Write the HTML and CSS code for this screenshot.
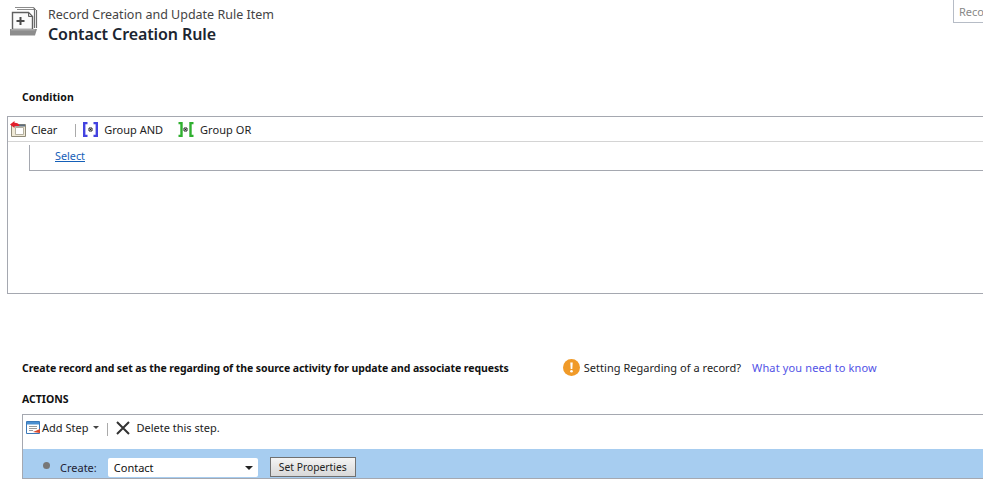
FILE: index.html
```html
<!DOCTYPE html>
<html lang="en">
<head>
<meta charset="utf-8">
<title>Contact Creation Rule</title>
<link rel="stylesheet" href="styles.css">
</head>
<body>
<header class="header">
  <svg class="header-icon" width="28" height="29" viewBox="0 0 28 29">
    <path d="M5 .5h19v2M7 2.500h19" fill="none" stroke="#8c8c8c"/>
    <path d="M24.500 1v20M26.500 3v18" fill="none" stroke="#6e6e6e" stroke-width="1.200"/>
    <path d="M2.500 5.500h16l4 4v13h-20z" fill="#fbfbfb" stroke="#5f5f5f" stroke-width="1.400"/>
    <path d="M18.500 5.500v4h4z" fill="#cfcfcf" stroke="#5f5f5f"/>
    <path d="M10.500 10v8M6.500 14h8" stroke="#4a4a4a" stroke-width="2"/>
    <path d="M0 22h27l-2 6.500H0z" fill="#8d8d8d"/>
    <path d="M1 22h24v1.500H1z" fill="#a8a8a8"/>
  </svg>
  <div class="titles">
    <div class="subtitle">Record Creation and Update Rule Item</div>
    <h1 class="title">Contact Creation Rule</h1>
  </div>
  <div class="search">Reco</div>
</header>

<h2 class="section-label condition-label">Condition</h2>
<section class="condition-panel">
  <div class="toolbar cond-toolbar">
    <span class="tool tool-clear">
      <svg width="16" height="16" viewBox="0 0 16 16">
        <path d="M1.500 3.500h14v12h-14z" fill="#efe9d6" stroke="#8f8a78"/>
        <path d="M5.500 6.500h8v7h-8z" fill="#fff" stroke="#b5b0a0"/>
        <path d="M4 4.500h11" stroke="#5d6d7e" stroke-width="2"/>
        <path d="M0 3.500 4.500 0v1.800c3 0 4.500.7 5 3.200H4.500v2z" fill="#e2202c"/>
      </svg>
      Clear
    </span>
    <span class="sep"></span>
    <span class="tool tool-and">
      <svg width="15" height="15" viewBox="0 0 15 15">
        <path d="M4.500 1H1.200v13h3.300M10.500 1h3.300v13h-3.300" fill="none" stroke="#4343e0" stroke-width="2.400"/>
        <path d="M6 6h3v3H6z" fill="#fff" stroke="#222"/>
        <path d="M7 7h1v1H7z" fill="#222"/>
      </svg>
      Group AND
    </span>
    <span class="tool tool-or">
      <svg width="16" height="15" viewBox="0 0 16 15">
        <path d="M.5 1h3v13h-3M15.500 1h-3v13h3" fill="none" stroke="#2fb02f" stroke-width="2.400"/>
        <path d="M6 6h3v3H6z" fill="#fff" stroke="#222"/>
        <path d="M7 7h1v1H7z" fill="#222"/>
      </svg>
      Group OR
    </span>
  </div>
  <div class="tree">
    <a class="link select-link" href="#">Select</a>
  </div>
</section>

<div class="notice-row">
  <h2 class="section-label notice-title">Create record and set as the regarding of the source activity for update and associate requests</h2>
  <div class="notice">
    <svg width="17" height="17" viewBox="0 0 17 17">
      <circle cx="8.500" cy="8.500" r="8.500" fill="#f09a28"/>
      <path d="M7.300 3.500h2.400l-.4 6.500H7.700z" fill="#fff"/>
      <circle cx="8.500" cy="12.300" r="1.300" fill="#fff"/>
    </svg>
    <span class="notice-text">Setting Regarding of a record?</span>
    <a class="need-link" href="#">What you need to know</a>
  </div>
</div>

<h2 class="section-label actions-label">ACTIONS</h2>
<section class="actions-panel">
  <div class="toolbar act-toolbar">
    <span class="tool tool-add">
      <svg width="14" height="13" viewBox="0 0 14 13">
        <path d="M.5.500h13v12H.5z" fill="#fff" stroke="#3a78b8"/>
        <path d="M1 1h12v2.500H1z" fill="#4a8fd0"/>
        <path d="M3 5.500h8M3 7.500h8M3 9.500h4" stroke="#999"/>
        <path d="M7 11l7-3v4z" fill="#d9482b"/>
      </svg>
      Add Step
      <span class="caret"></span>
    </span>
    <span class="sep act-sep"></span>
    <span class="tool tool-delete">
      <svg width="14" height="14" viewBox="0 0 14 14">
        <path d="M1 1l12 12M13 1 1 13" stroke="#333" stroke-width="2"/>
      </svg>
      Delete this step.
    </span>
  </div>
  <div class="step-row">
    <span class="bullet"></span>
    <span class="create-label">Create:</span>
    <span class="select-box">Contact<span class="caret dark"></span></span>
    <button class="props-btn" type="button">Set Properties</button>
  </div>
</section>
</body>
</html>
```

FILE: styles.css
```css
* { box-sizing: border-box; }
html, body { margin: 0; padding: 0; }
body {
  width: 983px;
  height: 495px;
  overflow: hidden;
  background: #fff;
  color: #111;
  font-family: "Noto Sans", "Open Sans", sans-serif;
  font-size: 11px;
}
.header {
  display: flex;
  align-items: flex-start;
  height: 88px;
  padding-left: 10px;
}
.header-icon { margin-top: 7px; flex: none; }
.titles { margin-left: 10px; margin-top: 6px; }
.subtitle { font-size: 12.500px; line-height: 18px; color: #444; }
.title { margin: 0; font-size: 16px; line-height: 21px; font-weight: 600; color: #1c2530; letter-spacing: -0.1px; }
.search {
  margin-left: auto;
  width: 30px;
  height: 23px;
  border: 1px solid #b6bcc6;
  border-right: 0;
  border-top: 0;
  padding: 5px 0 0 5px;
  overflow: hidden;
  color: #888;
  font-size: 11px;
  line-height: 14px;
  white-space: nowrap;
}
.section-label { margin: 0; font-size: 10.500px; font-weight: 700; color: #111; line-height: 14px; }
.condition-label { margin-left: 22px; margin-top: 2px; letter-spacing: 0.1px; }
.condition-panel {
  margin: 12px 0 0 7px;
  height: 178px;
  border: 1px solid #a5a8b0;
  border-right: 0;
}
.toolbar { display: flex; align-items: center; }
.cond-toolbar { height: 25px; border-bottom: 1px solid #d4d4d4; padding-left: 2px; }
.tool { display: flex; align-items: center; gap: 5px; white-space: nowrap; color: #222; font-size: 11px; }
.sep { width: 1px; height: 13px; background: #aaa; margin: 2px 7px 0 18px; }
.tool-clear { letter-spacing: -0.1px; }
.tool-and { gap: 6px; }
.tool-or { margin-left: 15px; gap: 6px; letter-spacing: 0.05px; }
.tree {
  margin: 3px 0 0 21px;
  height: 26px;
  border-left: 1px solid #a5a8b0;
  border-bottom: 1px solid #a5a8b0;
  padding: 3px 0 0 25px;
}
.link { color: #1560b8; font-size: 10.800px; line-height: 15px; }
.notice-row {
  display: flex;
  align-items: center;
  height: 18px;
  margin: 65px 0 0 22px;
}
.notice-title { letter-spacing: -0.087px; }
.notice { display: flex; align-items: center; margin-left: 54px; margin-bottom: 2px; }
.notice-text { margin-left: 4px; color: #222; font-size: 11px; letter-spacing: 0.03px; }
.need-link { margin-left: 11px; color: #5252e6; text-decoration: none; font-size: 11px; letter-spacing: 0.13px; }
.actions-label { margin: 15px 0 0 22px; }
.actions-panel {
  margin: 8px 0 0 22px;
  height: 65px;
  border: 1px solid #a5a8b0;
  border-right: 0;
}
.act-toolbar { height: 34px; padding: 0 0 9px 3px; }
.tool-add { gap: 2px; }
.caret {
  display: inline-block;
  width: 0;
  height: 0;
  margin-left: 3px;
  border: 3px solid transparent;
  border-top: 3px solid #444;
  border-bottom: 0;
}
.caret.dark { margin-left: auto; border-width: 4px; border-bottom: 0; border-top-color: #222; }
.act-sep { margin: 4px 8px 0 8px; }
.tool-delete { gap: 6px; }
.step-row {
  display: flex;
  align-items: flex-end;
  height: 29px;
  background: #a7cdf0;
  padding: 0 0 1px 20px;
}
.bullet { width: 7px; height: 7px; border-radius: 50%; background: #777; margin-bottom: 8px; }
.create-label { margin-left: 10px; color: #223; font-size: 11px; line-height: 19px; }
.select-box {
  display: flex;
  align-items: center;
  width: 150px;
  height: 19px;
  margin-left: 11px;
  padding: 0 5px 0 6px;
  background: #fff;
  border-radius: 2px;
  color: #111;
  font-size: 11px;
}
.props-btn {
  width: 86px;
  height: 20px;
  margin-left: 12px;
  padding: 0;
  border: 1px solid #707070;
  background: linear-gradient(#f4f4f4, #d8d8d8);
  color: #222;
  font-family: inherit;
  font-size: 10.300px;
}
```
